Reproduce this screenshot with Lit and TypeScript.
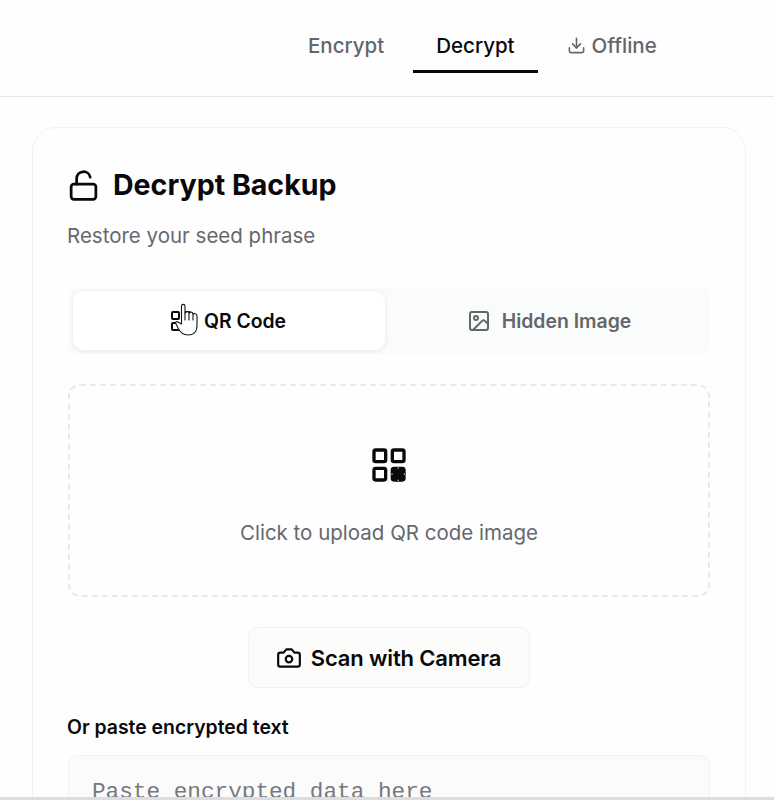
import { LitElement, html, css, svg } from "lit";
import { customElement } from "lit/decorators.js";

const ic = (size: number, body: unknown, sw = 2) => html`<svg class="ic" width=${size} height=${size} viewBox="0 0 24 24" fill="none" stroke="currentColor" stroke-width=${sw} stroke-linecap="round" stroke-linejoin="round">${body}</svg>`;

@customElement("app-root")
export class AppRoot extends LitElement {
  static styles = css`
    :host { display: block; position: relative; width: 774px; height: 800px; overflow: hidden; background: #fefefe; font-family: Inter, "Noto Sans", sans-serif; color: #09090b; }
    .ic { flex: none; display: block; }
    header { box-sizing: border-box; height: 97px; border-bottom: 1px solid #e6e7e9; display: flex; align-items: flex-start; gap: 6px; padding: 20px 0 0 285px; background: #fefefe; }
    .nav { box-sizing: border-box; height: 53px; padding: 0 23px; display: flex; align-items: center; gap: 6px; font-size: 20.5px; font-weight: 500; color: #64666d; border-bottom: 3px solid transparent; }
    .nav.on { color: #09090b; border-bottom-color: #09090b; }
    main { padding: 30px 28px 0 32px; }
    .card { box-sizing: border-box; height: 720px; border: 1px solid #f1f2f3; border-radius: 24px; padding: 33px 35px 0 34px; background: #fefefe; }
    .title { display: flex; align-items: center; gap: 13px; height: 44px; margin-top: 2px; }
    h1 { margin: 0; font-size: 28.55px; line-height: 44px; font-weight: 700; }
    .sub { margin: 15px 0 0; font-size: 20.5px; line-height: 28px; color: #66686e; }
    .tabs { display: grid; grid-template-columns: 312px 1fr; gap: 8px; box-sizing: border-box; height: 67px; margin-top: 37px; padding: 4px 0 4px 5px; background: #fafbfb; border-radius: 10px; width: 642px; margin-left: 1px; }
    .tab { display: flex; align-items: center; justify-content: center; gap: 11px; padding-right: 3px; font-size: 19.4px; font-weight: 600; color: #64666d; border-radius: 10px; }
    .tab.on { background: #fff; color: #09090b; box-shadow: 0 1px 5px rgba(0,0,0,.09); }
    .tab.hid { padding-right: 5px; }
    .drop { box-sizing: border-box; height: 213px; margin: 30px 0 0 1px; width: 642px; border: 2px dashed #e8e9eb; border-radius: 12px; display: flex; flex-direction: column; align-items: center; padding-top: 59px; gap: 34px; }
    .drop p { margin: 0; font-size: 20.5px; line-height: 28px; color: #66686e; }
    .scanrow { display: flex; justify-content: center; margin: 30px 0 0 1px; width: 642px; }
    .scan { box-sizing: border-box; width: 282px; height: 61px; border: 1px solid #f0f1f1; border-radius: 10px; background: #fcfcfa; display: flex; align-items: center; justify-content: center; gap: 9px; font-size: 22px; font-weight: 600; letter-spacing: -0.15px; padding-right: 1px; }
    .label { margin: 26px 0 0; font-size: 19.4px; line-height: 26px; font-weight: 600; }
    .area { box-sizing: border-box; width: 642px; height: 80px; margin: 15px 0 0 1px; border: 1px solid #f0f1f2; border-radius: 10px; background: #fbfbfb; padding: 22px 23px; font-family: "Liberation Mono", monospace; font-size: 22.7px; line-height: 28px; color: #76787e; white-space: nowrap; }
    .strip { position: absolute; left: 0; right: 0; bottom: 0; height: 3px; background: #dcdddd; }
    .hand { position: absolute; left: 171px; top: 302px; }
  `;

  render() {
    return html`
      <header>
        <div class="nav">Encrypt</div>
        <div class="nav on">Decrypt</div>
        <div class="nav">
          ${ic(19, svg`<path d="M21 15v4a2 2 0 0 1-2 2H5a2 2 0 0 1-2-2v-4"/><path d="M7 10l5 5 5-5"/><path d="M12 15V3"/>`)}
          Offline
        </div>
      </header>
      <main>
        <section class="card">
          <div class="title">
            ${ic(33, svg`<rect x="3" y="11" width="18" height="11" rx="2" ry="2"/><path d="M7 11V7a5 5 0 0 1 9.9-1"/>`)}
            <h1>Decrypt Backup</h1>
          </div>
          <p class="sub">Restore your seed phrase</p>
          <div class="tabs">
            <div class="tab on">
              ${ic(24, svg`<rect x="3" y="3" width="7" height="7" rx="1"/><rect x="14" y="3" width="7" height="7" rx="1"/><rect x="3" y="14" width="7" height="7" rx="1"/><rect x="14" y="14" width="7" height="7" rx="1"/>`)}
              QR Code
            </div>
            <div class="tab hid">
              ${ic(24, svg`<rect x="3" y="3" width="18" height="18" rx="2" ry="2"/><circle cx="9" cy="9" r="2"/><path d="M21 15l-3.1-3.1a2 2 0 0 0-2.8 0L6 21"/>`)}
              Hidden Image
            </div>
          </div>
          <div class="drop">
            ${ic(40, svg`<rect x="3" y="3" width="7" height="7" rx="1"/><rect x="14" y="3" width="7" height="7" rx="1"/><rect x="3" y="14" width="7" height="7" rx="1"/><rect x="14" y="14" width="7" height="7" rx="1" fill="currentColor"/><path d="M17.5 13.5v.6M17.5 20.9v.6M13.5 17.5h.6M20.9 17.5h.6" stroke="#fff" stroke-width="0.7" stroke-linecap="butt"/>`)}
            <p>Click to upload QR code image</p>
          </div>
          <div class="scanrow">
            <div class="scan">
              ${ic(26, svg`<path d="M14.5 4h-5L7 7H4a2 2 0 0 0-2 2v9a2 2 0 0 0 2 2h16a2 2 0 0 0 2-2V9a2 2 0 0 0-2-2h-3z"/><circle cx="12" cy="13" r="3"/>`)}
              Scan with Camera
            </div>
          </div>
          <p class="label">Or paste encrypted text</p>
          <div class="area">Paste encrypted data here</div>
        </section>
      </main>
      <svg class="hand" width="28" height="36" viewBox="0 0 28 36" fill="#fff" stroke="#161616" stroke-width="1.1" stroke-linejoin="round" stroke-linecap="round">
        <path d="M10.5 22 L10.5 4 C10.5 1.8 14 1.8 14 4 L14 11 C16 9 18 9.5 18 11 C20 9.5 22 10 22 12 C24 11 26 12 26 14 L26 24 C26 30 22 33 17 33 C12 33 9 30 7 26 L5 22 C4 20 5 19 7 20 Z"/>
        <path d="M14 11 L14 18 M18 11 L18 18 M22 12 L22 18" fill="none"/>
      </svg>
      <div class="strip"></div>
    `;
  }
}
